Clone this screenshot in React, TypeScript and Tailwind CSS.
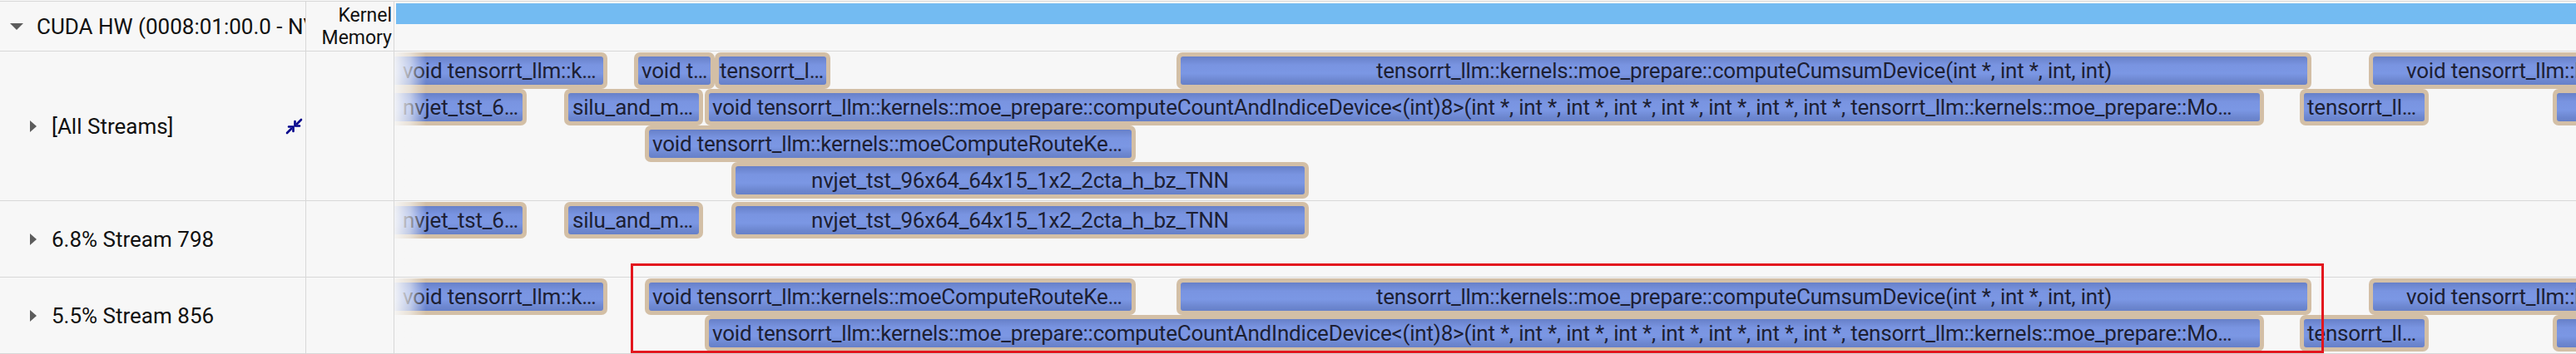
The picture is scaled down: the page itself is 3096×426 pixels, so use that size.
import React from "react";

type Bar = { x0: number; x1: number; text?: string; center?: boolean; tx?: number };

const T0 = 474;

const A: Bar = { x0: 430, x1: 730, text: "void tensorrt_llm::k…", tx: 484 };
const B: Bar = { x0: 762, x1: 859, text: "void t…", tx: 771 };
const C: Bar = { x0: 859, x1: 998, text: "tensorrt_l…", tx: 865 };
const D: Bar = {
  x0: 1414,
  x1: 2778,
  text: "tensorrt_llm::kernels::moe_prepare::computeCumsumDevice(int *, int *, int, int)",
  center: true,
};
const E: Bar = { x0: 2847, x1: 3500, text: "void tensorrt_llm::kernels::moeComputeRouteKernel", tx: 2892 };
const F: Bar = { x0: 430, x1: 633, text: "nvjet_tst_6…", tx: 484 };
const G: Bar = { x0: 678, x1: 845, text: "silu_and_m…", tx: 688 };
const H: Bar = {
  x0: 847,
  x1: 2721,
  text:
    "void tensorrt_llm::kernels::moe_prepare::computeCountAndIndiceDevice<(int)8>(int *, int *, int *, int *, int *, int *, int *, int *, tensorrt_llm::kernels::moe_prepare::Mo…",
  tx: 856,
};
const I: Bar = { x0: 2764, x1: 2919, text: "tensorrt_ll…", tx: 2773 };
const J: Bar = { x0: 3068, x1: 3400 };
const K: Bar = { x0: 775, x1: 1365, text: "void tensorrt_llm::kernels::moeComputeRouteKe…", tx: 784 };
const L: Bar = { x0: 879, x1: 1573, text: "nvjet_tst_96x64_64x15_1x2_2cta_h_bz_TNN", center: true };

const allStreams: Bar[][] = [[A, B, C, D, E], [F, G, H, I, J], [K], [L]];
const s798: Bar[][] = [[F, G, L], []];
const s856: Bar[][] = [[A, K, D, E], [H, I, J]];

function KernelBar({ bar }: { bar: Bar }) {
  const innerLeft = bar.x0 + 5;
  return (
    <div
      className="absolute top-0 h-[44px] rounded-[7px] bg-[#d3bfa6] p-[5px]"
      style={{ left: bar.x0 - T0, width: bar.x1 - bar.x0 }}
    >
      <div
        className={
          "flex h-full items-center overflow-hidden whitespace-nowrap rounded-[3px] bg-[linear-gradient(to_bottom,#6780c8,#7994e1_30%,#7b97e4_60%,#6d87d0_85%,#6680c8)] text-[26px] leading-none tracking-[-0.2px] text-[#1d2033] " +
          (bar.center ? "justify-center" : "")
        }
        style={bar.center ? undefined : { paddingLeft: (bar.tx ?? innerLeft + 4) - innerLeft }}
      >
        {bar.text}
      </div>
    </div>
  );
}

function Lanes({ lanes }: { lanes: Bar[][] }) {
  return (
    <div className="relative h-full overflow-hidden pt-[1px]">
      {lanes.map((lane, i) => (
        <div key={i} className="relative h-[44px]">
          {lane.map((b, j) => (
            <KernelBar key={j} bar={b} />
          ))}
        </div>
      ))}
      <div className="absolute left-0 top-0 h-full w-[38px] bg-linear-to-r from-[#f7f7f7f0] via-[#f7f7f799] to-transparent" />
    </div>
  );
}

function RightTri() {
  return (
    <svg width="8" height="14" viewBox="0 0 8 14" className="shrink-0">
      <path d="M0 0 L8 7 L0 14 Z" fill="#5c5c5c" />
    </svg>
  );
}

function CollapseIcon() {
  return (
    <svg width="21" height="20" viewBox="0 0 21 20" className="shrink-0">
      <g stroke="#00008b" strokeWidth="2.6" fill="none" strokeLinecap="round" strokeLinejoin="round">
        <path d="M19 2 L14 7" />
        <path d="M11.5 4 L11.5 9.5 L17 9.5" />
        <path d="M2 18 L7 13" />
        <path d="M4 10.5 L9.5 10.5 L9.5 16" />
      </g>
    </svg>
  );
}

function StreamLabel({ text, icon }: { text: string; icon?: boolean }) {
  return (
    <div className="flex h-full items-center justify-between border-r border-[#d8d8d8] pl-[36px] pr-[3px]">
      <div className="flex items-center gap-[18px]">
        <RightTri />
        <span className="text-[26px] leading-none text-[#111]">{text}</span>
      </div>
      {icon ? <CollapseIcon /> : null}
    </div>
  );
}

export default function App() {
  return (
    <div className="relative h-[426px] w-[3096px] overflow-hidden bg-[#f7f7f7] pt-[1px] font-['Roboto','Noto_Sans',sans-serif]">
      <div className="border-t border-[#d8d8d8]">
        {/* header row */}
        <div className="grid h-[60px] grid-cols-[368px_106px_1fr] border-b border-[#d8d8d8]">
          <div className="flex items-center gap-[16px] overflow-hidden whitespace-nowrap border-r border-[#d8d8d8] pl-[12px]">
            <svg width="16" height="8" viewBox="0 0 16 8" className="shrink-0">
              <path d="M0 0 L16 0 L8 8 Z" fill="#5c5c5c" />
            </svg>
            <span className="text-[26px] leading-none text-[#111]">CUDA HW (0008:01:00.0 - NVIDIA GH200 480GB HBM3)</span>
          </div>
          <div className="flex flex-col items-end justify-center border-r border-[#d8d8d8] pr-[2px] text-[23px] leading-[27px] text-[#111]">
            <span>Kernel</span>
            <span>Memory</span>
          </div>
          <div className="pl-[2px] pt-[2px]">
            <div className="h-[25px] bg-[#73bbf2]" />
          </div>
        </div>

        {/* All Streams */}
        <div className="grid h-[180px] grid-cols-[368px_106px_1fr] border-b border-[#d8d8d8]">
          <StreamLabel text="[All Streams]" icon />
          <div className="border-r border-[#d8d8d8]" />
          <Lanes lanes={allStreams} />
        </div>

        {/* Stream 798 */}
        <div className="grid h-[92px] grid-cols-[368px_106px_1fr] border-b border-[#d8d8d8]">
          <StreamLabel text="6.8% Stream 798" />
          <div className="border-r border-[#d8d8d8]" />
          <Lanes lanes={s798} />
        </div>

        {/* Stream 856 */}
        <div className="grid h-[92px] grid-cols-[368px_106px_1fr] border-b border-[#d8d8d8]">
          <StreamLabel text="5.5% Stream 856" />
          <div className="border-r border-[#d8d8d8]" />
          <Lanes lanes={s856} />
        </div>
      </div>

      {/* red annotation box */}
      <div className="absolute left-[758px] top-[317px] h-[108px] w-[2035px] border-[3px] border-[#e3161e]" />
    </div>
  );
}
